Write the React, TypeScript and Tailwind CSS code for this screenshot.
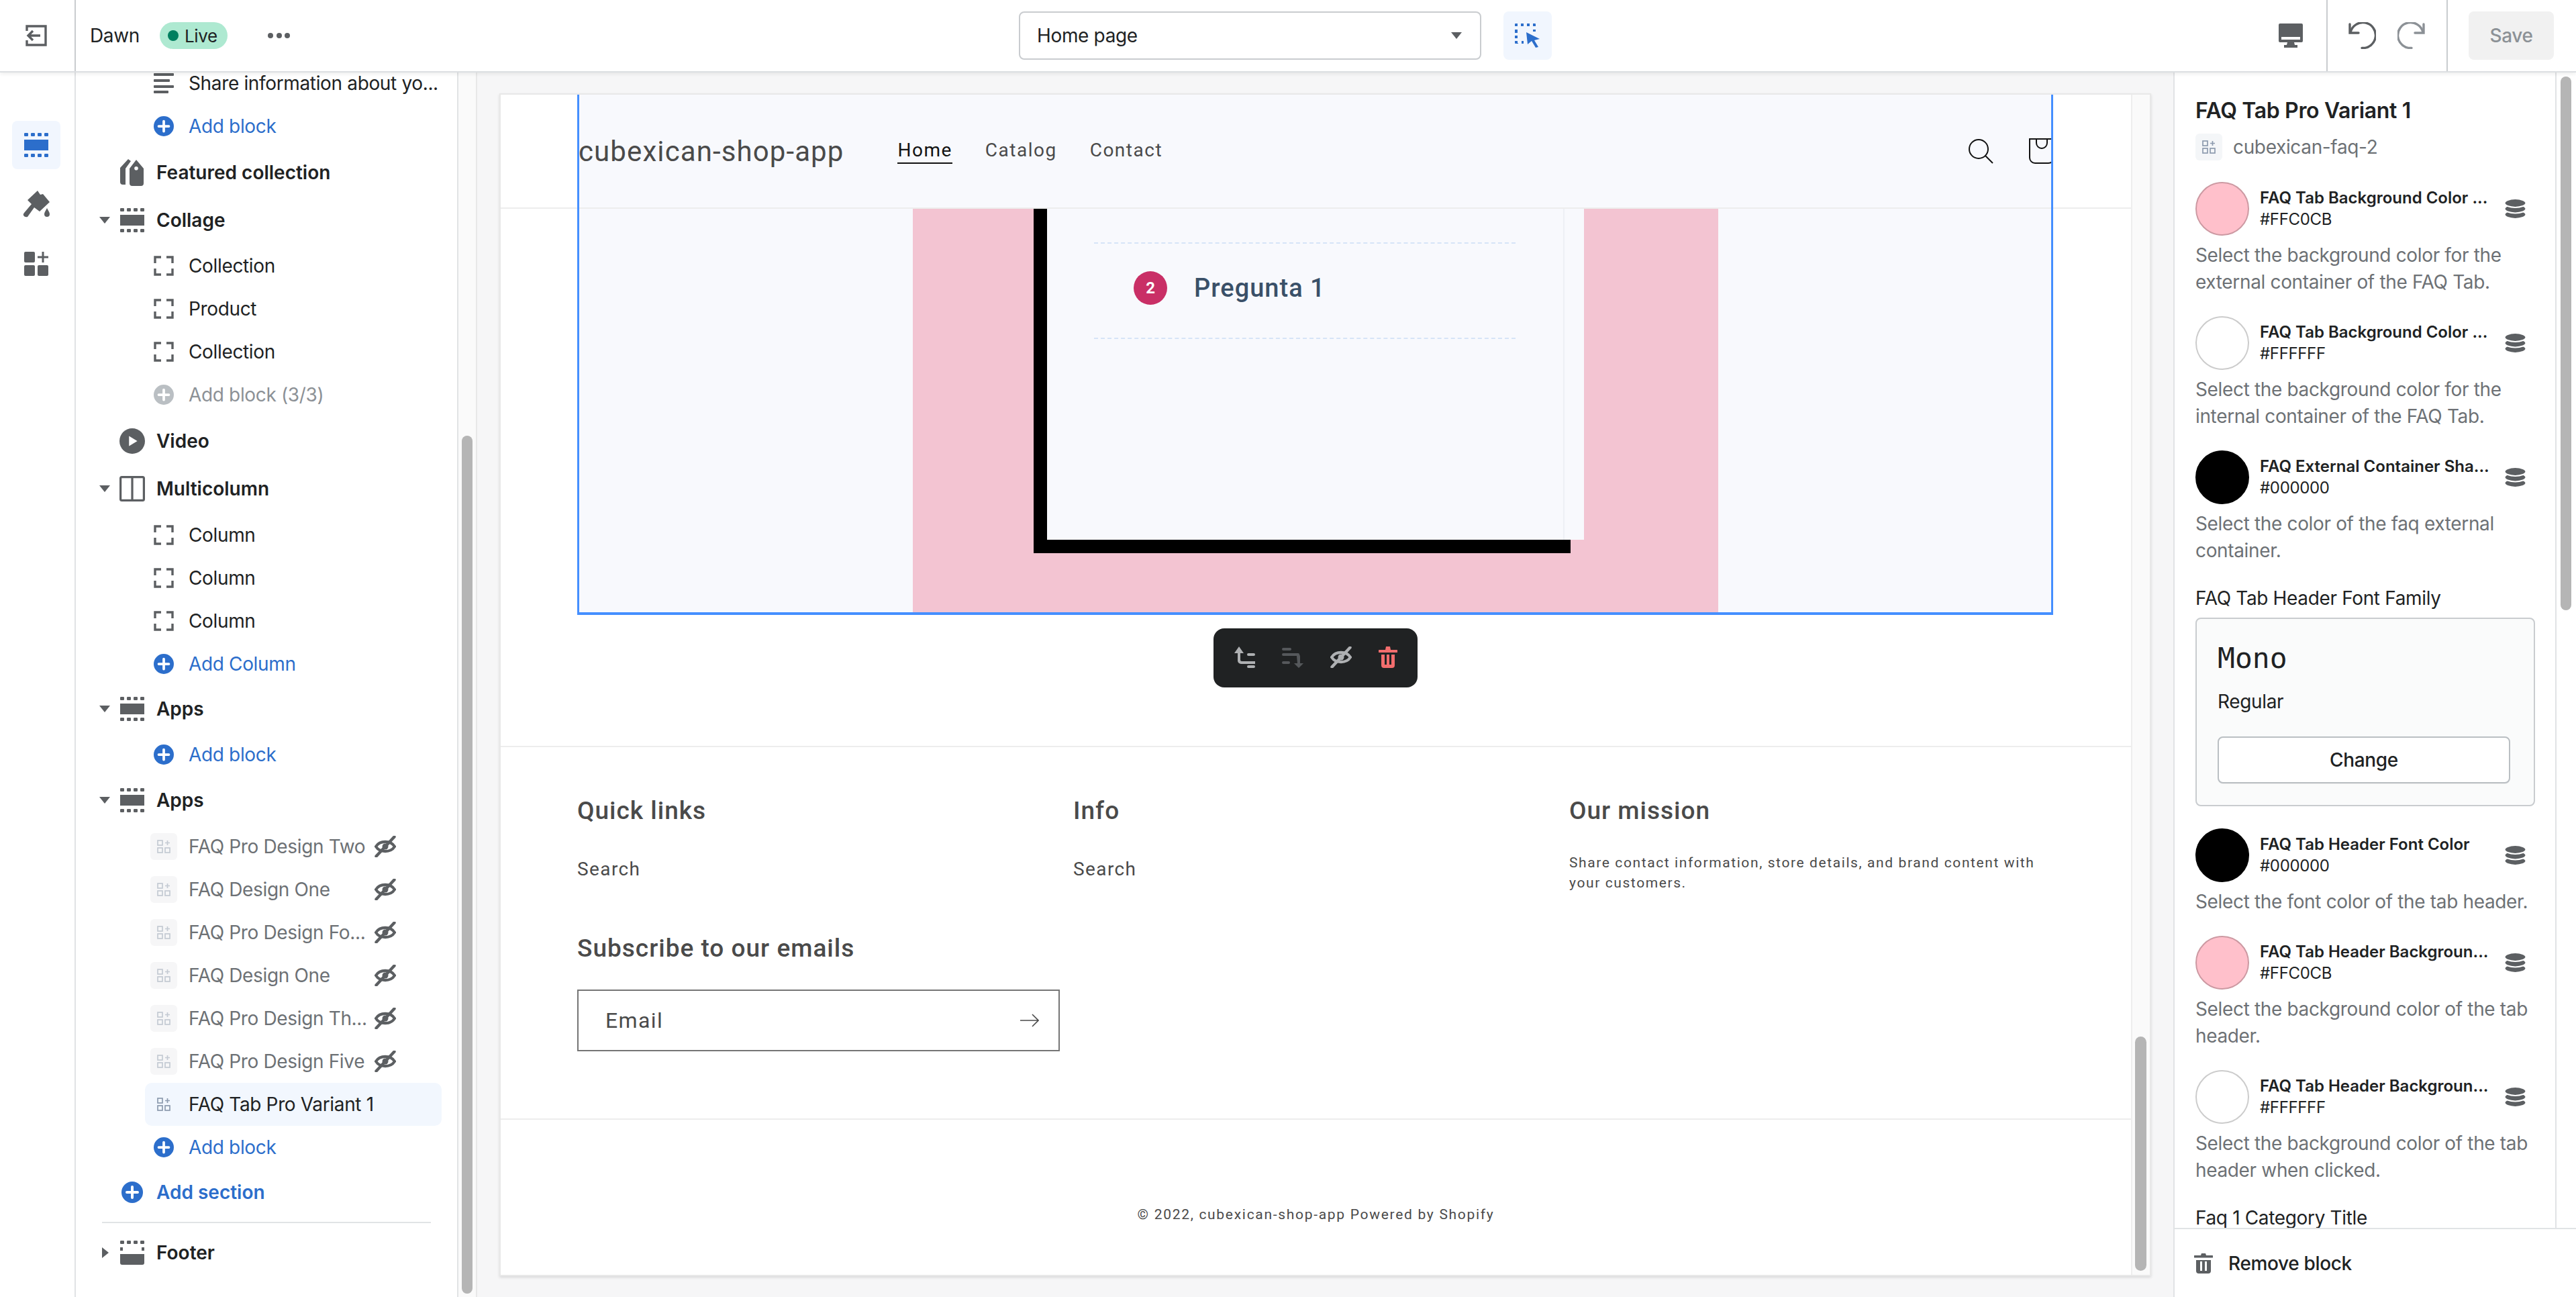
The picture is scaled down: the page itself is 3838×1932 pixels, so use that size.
import type { ReactNode } from "react"

const C = "font-['Inter','Liberation_Sans',sans-serif]"
const STORE = "font-['Roboto','Liberation_Sans',sans-serif]"

function SectionGlyph({ className = "", variant = "mid" }: { className?: string; variant?: "mid" | "footer" }) {
  const xs = [0, 10, 20, 30]
  return (
    <svg viewBox="0 0 36 36" className={className} fill="currentColor">
      {xs.map((x) => <rect key={x} x={x} y={0} width={6} height={5} rx={1.2} />)}
      {variant === "mid" ? (
        <>
          <rect x={0} y={10} width={36} height={16} />
          {xs.map((x) => <rect key={x} x={x} y={31} width={6} height={5} rx={1.2} />)}
        </>
      ) : (
        <>
          <rect x={0} y={10} width={4} height={5} />
          <rect x={32} y={10} width={4} height={5} />
          <path d="M0 20h36v13a3 3 0 0 1-3 3H3a3 3 0 0 1-3-3z" />
        </>
      )}
    </svg>
  )
}

function CornersGlyph() {
  return (
    <svg viewBox="0 0 30 30" className="h-[30px] w-[30px] text-[#5c5f62]" fill="none" stroke="currentColor" strokeWidth={3.4}>
      <path d="M2 11V2h9M19 2h9v9M28 19v9h-9M11 28H2v-9" />
    </svg>
  )
}

function LinesGlyph() {
  return (
    <svg viewBox="0 0 30 30" className="h-[30px] w-[30px] text-[#5c5f62]" fill="currentColor">
      <rect x={0} y={0} width={30} height={4} rx={1} />
      <rect x={0} y={9} width={24} height={4} rx={1} />
      <rect x={0} y={18} width={30} height={4} rx={1} />
      <rect x={0} y={26} width={22} height={4} rx={1} />
    </svg>
  )
}

function PlusCircle({ className = "" }: { className?: string }) {
  return (
    <svg viewBox="0 0 32 32" className={`h-[32px] w-[32px] ${className}`}>
      <circle cx={16} cy={16} r={16} fill="currentColor" />
      <path d="M16 8v16M8 16h16" stroke="#fff" strokeWidth={4} strokeLinecap="round" />
    </svg>
  )
}

function AppGlyph({ className = "" }: { className?: string }) {
  return (
    <svg viewBox="0 0 20 20" className={`h-[20px] w-[20px] ${className}`} fill="none" stroke="currentColor" strokeWidth={1.7}>
      <rect x={1} y={1} width={7} height={7} />
      <rect x={1} y={12} width={7} height={7} />
      <rect x={12} y={12} width={7} height={7} />
      <path d="M15.5 1v7M12 4.5h7" />
    </svg>
  )
}

function EyeOff({ className = "" }: { className?: string }) {
  return (
    <svg viewBox="0 0 32 32" className={`h-[32px] w-[32px] ${className}`} fill="none" stroke="currentColor">
      <path d="M2 16C8 6.500 24 6.500 30 16C24 25.500 8 25.500 2 16Z" strokeWidth={4.2} />
      <circle cx={16} cy={16} r={4.500} fill="currentColor" stroke="none" />
      <path d="M2.500 30.500L29.500 1.500" strokeWidth={4.4} strokeLinecap="round" />
    </svg>
  )
}

function DbGlyph() {
  return (
    <svg viewBox="0 0 31 30" className="h-[30px] w-[31px] text-[#5c5f62]" fill="currentColor" stroke="#fff" strokeWidth={2.2}>
      <ellipse cx={15.5} cy={23.500} rx={16} ry={6.500} />
      <ellipse cx={15.5} cy={15} rx={16} ry={6.500} />
      <ellipse cx={15.5} cy={6.500} rx={16} ry={6.500} />
    </svg>
  )
}

function Caret({ open = true }: { open?: boolean }) {
  return open ? (
    <svg viewBox="0 0 16 10" className="h-[10px] w-[16px] text-[#5c5f62]" fill="currentColor"><path d="M0 0h16L8 10z" /></svg>
  ) : (
    <svg viewBox="0 0 10 16" className="ml-[4px] h-[16px] w-[10px] text-[#5c5f62]" fill="currentColor"><path d="M0 0v16l10-8z" /></svg>
  )
}

function TagGlyph() {
  return (
    <svg viewBox="0 0 36 40" className="h-[40px] w-[36px] text-[#5c5f62]" fill="currentColor">
      <path fillRule="evenodd" d="M24 1l11 13v22a4 4 0 0 1-4 4H18a4 4 0 0 1-4-4V14zM24 11a2.800 2.800 0 1 0 0 5.600 2.800 2.800 0 0 0 0-5.600z" />
      <path d="M12 0l4 3-8 11v24H4a4 4 0 0 1-4-4V13z" />
    </svg>
  )
}

function PlayGlyph() {
  return (
    <svg viewBox="0 0 40 40" className="h-[40px] w-[40px] text-[#5c5f62]">
      <circle cx={20} cy={20} r={20} fill="currentColor" />
      <path d="M15 12l13 8-13 8z" fill="#fff" />
    </svg>
  )
}

function ColumnsGlyph() {
  return (
    <svg viewBox="0 0 40 40" className="h-[40px] w-[40px] text-[#5c5f62]" fill="none" stroke="currentColor" strokeWidth={3.4}>
      <rect x={1.7} y={1.7} width={36.6} height={36.6} rx={2} />
      <path d="M20 2v36" />
    </svg>
  )
}

// one row of the theme tree, top level
function SectionRow({ icon, label, caret, className = "h-[70px]" }: { icon: ReactNode; label: string; caret?: "open" | "closed"; className?: string }) {
  return (
    <div className={`flex shrink-0 items-center ${className}`}>
      <div className="ml-[35px] flex w-[30px] items-center">{caret && <Caret open={caret === "open"} />}</div>
      <div className="flex w-[38px] justify-center">{icon}</div>
      <span className="ml-[17px] text-[28px] font-semibold tracking-normal text-[#202223]">{label}</span>
    </div>
  )
}

function BlockRow({ icon, label, labelClass = "text-[#202223]", className = "" }: { icon: ReactNode; label: string; labelClass?: string; className?: string }) {
  return (
    <div className={`flex h-[64px] shrink-0 items-center ${className}`}>
      <div className="ml-[116px] flex w-[30px] justify-center">{icon}</div>
      <span className={`ml-[22px] whitespace-nowrap text-[28px] ${labelClass}`}>{label}</span>
    </div>
  )
}

function AddBlock({ label = "Add block", className = "" }: { label?: string; className?: string }) {
  return <BlockRow icon={<PlusCircle className="text-[#2c6ecb]" />} label={label} labelClass="text-[#2c6ecb]" className={className} />
}

function HiddenApp({ label }: { label: string }) {
  return (
    <div className="flex h-[64px] shrink-0 items-center">
      <div className="ml-[111px] flex h-[40px] w-[40px] items-center justify-center rounded-[6px] bg-[#f6f6f7]">
        <AppGlyph className="text-[#c4cad3]" />
      </div>
      <span className="ml-[17px] w-[277px] whitespace-nowrap text-[28px] text-[#6d7175]">{label}</span>
      <EyeOff className="text-[#5c5f62]" />
    </div>
  )
}

function Tree() {
  return (
    <div className="flex w-[570px] shrink-0 flex-col overflow-hidden border-r-2 border-[#e1e3e5] bg-white">
      <div className="-mt-[16px] flex flex-col">
        <BlockRow icon={<LinesGlyph />} label="Share information about yo..." />
        <AddBlock />
        <SectionRow className="mt-[2px] h-[70px]" icon={<TagGlyph />} label="Featured collection" />
        <SectionRow className="h-[72px]" caret="open" icon={<SectionGlyph className="h-[36px] w-[36px] text-[#5c5f62]" />} label="Collage" />
        <BlockRow icon={<CornersGlyph />} label="Collection" />
        <BlockRow icon={<CornersGlyph />} label="Product" />
        <BlockRow icon={<CornersGlyph />} label="Collection" />
        <BlockRow icon={<PlusCircle className="text-[#babfc3]" />} label="Add block (3/3)" labelClass="text-[#8c9196]" />
        <SectionRow className="mt-[2px] h-[70px]" icon={<PlayGlyph />} label="Video" />
        <SectionRow className="h-[72px]" caret="open" icon={<ColumnsGlyph />} label="Multicolumn" />
        <BlockRow icon={<CornersGlyph />} label="Column" className="mt-[1px]" />
        <BlockRow icon={<CornersGlyph />} label="Column" />
        <BlockRow icon={<CornersGlyph />} label="Column" />
        <AddBlock label="Add Column" />
        <SectionRow className="mt-[1px] h-[68px]" caret="open" icon={<SectionGlyph className="h-[36px] w-[36px] text-[#5c5f62]" />} label="Apps" />
        <AddBlock className="mt-[2px]" />
        <SectionRow className="mt-[1px] h-[70px]" caret="open" icon={<SectionGlyph className="h-[36px] w-[36px] text-[#5c5f62]" />} label="Apps" />
        <div className="mt-[2px] flex flex-col">
          <HiddenApp label="FAQ Pro Design Two" />
          <HiddenApp label="FAQ Design One" />
          <HiddenApp label="FAQ Pro Design Fo..." />
          <HiddenApp label="FAQ Design One" />
          <HiddenApp label="FAQ Pro Design Th..." />
          <HiddenApp label="FAQ Pro Design Five" />
          <div className="ml-[103px] flex h-[64px] w-[442px] items-center rounded-[10px] bg-[#f2f7fe]">
            <div className="ml-[8px] flex h-[40px] w-[40px] items-center justify-center">
              <AppGlyph className="text-[#8c9aae]" />
            </div>
            <span className="ml-[17px] text-[28px] text-[#202223]">FAQ Tab Pro Variant 1</span>
          </div>
          <AddBlock />
        </div>
        <div className="flex h-[70px] shrink-0 items-center">
          <div className="ml-[65px] flex w-[38px] justify-center"><PlusCircle className="text-[#2c6ecb]" /></div>
          <span className="ml-[17px] text-[28px] font-semibold tracking-normal text-[#2c6ecb]">Add section</span>
        </div>
        <div className="mx-[39px] mt-[9px] h-[2px] bg-[#e1e3e5]" />
        <SectionRow className="mt-[9px] h-[70px]" caret="closed" icon={<SectionGlyph variant="footer" className="h-[36px] w-[36px] text-[#5c5f62]" />} label="Footer" />
      </div>
    </div>
  )
}

function Rail() {
  return (
    <div className="flex w-[113px] shrink-0 flex-col items-start border-r-2 border-[#e1e3e5] bg-white">
      <div className="ml-[18px] mt-[72px] flex h-[72px] w-[72px] items-center justify-center rounded-[8px] bg-[#f1f6fe]">
        <SectionGlyph className="h-[36px] w-[36px] text-[#2c6ecb]" />
      </div>
      <svg viewBox="0 0 40 40" className="ml-[34px] mt-[32px] h-[40px] w-[40px] text-[#5c5f62]" fill="currentColor">
        <path d="M22 0l4 6 4-1 10 12-15 14-8-6L7 39q-4 1-6-2-1-2 1-4l11-13-6-6z" />
        <path d="M36 26c2 4 4 6 4 9a4 4 0 0 1-8 0c0-3 2-5 4-9z" />
      </svg>
      <svg viewBox="0 0 36 36" className="ml-[36px] mt-[51px] h-[36px] w-[36px] text-[#5c5f62]" fill="currentColor">
        <rect x={0} y={0} width={16} height={16} rx={2} />
        <rect x={0} y={20} width={16} height={16} rx={2} />
        <rect x={20} y={20} width={16} height={16} rx={2} />
        <path d="M26.500 0h3v6.500H36v3h-6.500V16h-3V9.500H20v-3h6.500z" />
      </svg>
    </div>
  )
}

function TopBar() {
  return (
    <div className="relative z-10 flex h-[108px] shrink-0 items-center border-b-2 border-[#dcdfe2] bg-white shadow-[0_2px_6px_rgba(0,0,0,0.08)]">
      <div className="flex h-full w-[113px] shrink-0 items-center border-r-2 border-[#c9cccf] pl-[38px]">
        <svg viewBox="0 0 32 32" className="h-[32px] w-[32px] text-[#5c5f62]" fill="none" stroke="currentColor" strokeWidth={3.4}>
          <path d="M2 9V2h28v28H2v-7" />
          <path d="M22 16H4M11 9l-7 7 7 7" />
        </svg>
      </div>
      <span className="ml-[21px] text-[28px] text-[#202223]">Dawn</span>
      <div className="ml-[30px] flex h-[40px] w-[101px] items-center rounded-full bg-[#aee9d1] pl-[12px]">
        <span className="h-[16px] w-[16px] rounded-full bg-[#007f5f]" />
        <span className="ml-[9px] text-[26px] text-[#202223]">Live</span>
      </div>
      <div className="ml-[60px] flex gap-[4.500px]">
        <span className="h-[8px] w-[8px] rounded-full bg-[#5c5f62]" />
        <span className="h-[8px] w-[8px] rounded-full bg-[#5c5f62]" />
        <span className="h-[8px] w-[8px] rounded-full bg-[#5c5f62]" />
      </div>
      <div className="ml-[1086px] flex h-[72px] w-[689px] items-center justify-between rounded-[8px] border-2 border-[#c9cccf] pl-[25px] pr-[27px]">
        <span className="text-[28px] text-[#202223]">Home page</span>
        <svg viewBox="0 0 16 10" className="h-[10px] w-[16px] text-[#5c5f62]" fill="currentColor"><path d="M0 0h16L8 10z" /></svg>
      </div>
      <div className="ml-[33px] flex h-[72px] w-[72px] items-center justify-center rounded-[8px] bg-[#f1f6fe]">
        <svg viewBox="0 0 38 36" className="h-[36px] w-[38px] text-[#2c6ecb]" fill="currentColor">
          <path d="M0 1a1 1 0 0 1 1-1h3v4H0zM9 0h4v4H9zM18 0h4v4h-4zM27 0h3a1 1 0 0 1 1 1v3h-4zM0 9h4v5H0zM27 9h4v3h-4zM0 18h4v4H0zM0 26h4v3h1v1H1a1 1 0 0 1-1-1zM10 26h3v4h-3z" />
          <path d="M17 13l20 10-8 2 6 10-4 1-6-10-6 5z" />
        </svg>
      </div>
      <div className="ml-auto flex h-full items-center">
        <svg viewBox="0 0 36 36" className="h-[36px] w-[36px] text-[#5c5f62]" fill="currentColor">
          <path fillRule="evenodd" d="M2 0h32a2 2 0 0 1 2 2v24a2 2 0 0 1-2 2H2a2 2 0 0 1-2-2V2a2 2 0 0 1 2-2zM4 20v4h28v-4z" />
          <path d="M13 28h10l1 4h4v4H8v-4h4z" />
        </svg>
        <div className="ml-[35px] flex h-full items-center border-x-2 border-[#c9cccf] pl-[31px] pr-[32px]">
          <svg viewBox="0 0 41 40" className="h-[40px] w-[41px] text-[#5c5f62]" fill="none" stroke="currentColor" strokeWidth={3.4} strokeLinecap="round">
            <path d="M2 3v13h13" />
            <path d="M3 15A19 19 0 1 1 20 38.500" />
          </svg>
          <svg viewBox="0 0 41 40" className="ml-[32px] h-[40px] w-[41px] text-[#8c9196]" fill="none" stroke="currentColor" strokeWidth={3.4} strokeLinecap="round">
            <path d="M39 3v13H26" />
            <path d="M38 15A19 19 0 1 0 21 38.500" />
          </svg>
        </div>
        <div className="ml-[31px] mr-[33px] flex h-[72px] w-[127px] items-center justify-center rounded-[8px] bg-[#f1f1f1] text-[28px] font-medium text-[#8c9196]">
          Save
        </div>
      </div>
    </div>
  )
}

function FloatingTools() {
  return (
    <div className="absolute left-[1062px] top-[24px] flex h-[88px] w-[304px] items-center justify-center gap-[40px] rounded-[16px] bg-[#202223] pb-[2px]">
      <svg viewBox="0 0 32 32" className="h-[32px] w-[32px] text-[#aeb0b2]" fill="currentColor">
        <path d="M8 0l7 10h-5v10a2 2 0 0 0 2 2h20v4H11a5 5 0 0 1-5-5V10H1z" />
        <rect x={20} y={10} width={12} height={4} rx={2} />
        <rect x={20} y={28} width={12} height={4} rx={2} />
      </svg>
      <svg viewBox="0 0 32 32" className="h-[32px] w-[32px] text-[#55585b]" fill="currentColor">
        <rect x={0} y={2} width={14} height={4} rx={2} />
        <rect x={0} y={10} width={26} height={4} rx={2} />
        <path d="M22 14v-4a5 5 0 0 1 5 5v10h5l-7 7-7-7h5z" />
        <rect x={0} y={22} width={12} height={4} rx={2} />
      </svg>
      <EyeOff className="text-[#aeb0b2]" />
      <svg viewBox="0 0 28 32" className="h-[32px] w-[28px] text-[#f26d6d]" fill="currentColor">
        <path d="M11 0h6l1 5h9a1.500 1.500 0 0 1 0 4H1a1.500 1.500 0 0 1 0-4h9z" />
        <path fillRule="evenodd" d="M4 12h20v16a4 4 0 0 1-4 4H8a4 4 0 0 1-4-4zM9 12v15h3V12zM16 12v15h3V12z" />
      </svg>
    </div>
  )
}

function Preview() {
  return (
    <div className="flex h-full flex-1 overflow-hidden border-2 border-[#e8e8e8] bg-white shadow-[0_2px_4px_rgba(0,0,0,0.12)]">
      <div className={`w-[2429px] shrink-0 text-[#4a4a4a] ${STORE}`}>
        <div className="relative border-b-2 border-[#ededed]">
          <div className="ml-[116px] flex h-[168px] w-[2196px] items-center overflow-hidden bg-[#f8f9fd]">
            <span className="text-[42px] tracking-[1.100px]">cubexican-shop-app</span>
            <nav className="ml-[80px] flex gap-[49px] text-[28px] tracking-[1.500px]">
              <span className="border-b-2 border-[#121212] leading-[36px] text-[#121212]">Home</span>
              <span className="leading-[36px]">Catalog</span>
              <span className="leading-[36px]">Contact</span>
            </nav>
            <svg viewBox="0 0 38 38" className="ml-auto h-[38px] w-[38px] text-[#121212]" fill="none" stroke="currentColor" strokeWidth={2}>
              <circle cx={16} cy={16} r={14} />
              <path d="M26 26l11 11" />
            </svg>
            <svg viewBox="0 0 38 38" className="-mr-[3px] ml-[53px] h-[38px] w-[38px] shrink-0 text-[#121212]" fill="none" stroke="currentColor" strokeWidth={2}>
              <path d="M1 1h36v28a8 8 0 0 1-8 8H9a8 8 0 0 1-8-8z" />
              <path d="M11 1v6a8 8 0 0 0 16 0V1" />
            </svg>
          </div>
        </div>
        <div className="relative">
          <div className="ml-[116px] flex h-[601px] w-[2196px] justify-center bg-[#f8f9fd]">
            <div className="flex h-full w-[1200px] justify-center overflow-hidden bg-[#f3c4d2]">
              <div className="-mt-[40px] flex h-[533px] w-[800px] bg-[#f8f9fd] shadow-[-20px_20px_0_#000]">
                <div className="w-[771px] border-r-2 border-[#eef0f5] pl-[70px] pt-[90px]">
                  <div className="flex h-[144px] w-[628px] items-center border-y-2 border-dashed border-[#d6e4f7] pb-[8px] pl-[59px]">
                    <span className="flex h-[50px] w-[50px] items-center justify-center rounded-full bg-[#c92f66] text-[24px] font-bold text-white">2</span>
                    <span className="ml-[40px] text-[38px] font-medium tracking-[1px] text-[#3a5068]">Pregunta 1</span>
                  </div>
                </div>
              </div>
            </div>
          </div>
          <div className="relative h-[201px] border-b-2 border-[#ededed]">
            <FloatingTools />
          </div>
          <div className="pointer-events-none absolute -top-[172px] bottom-[197px] left-[114px] w-[2199px] border-x-[3px] border-b-4 border-[#458fff]" />
        </div>
        <footer className="pl-[114px]">
          <div className="grid grid-cols-[739px_739px_700px] pt-[73px]">
            <div>
              <h3 className="text-[37px] font-medium leading-[44px] tracking-[1px]">Quick links</h3>
              <p className="mt-[45px] text-[28px] leading-[40px] tracking-[1.400px]">Search</p>
            </div>
            <div>
              <h3 className="text-[37px] font-medium leading-[44px] tracking-[1px]">Info</h3>
              <p className="mt-[45px] text-[28px] leading-[40px] tracking-[1.400px]">Search</p>
            </div>
            <div>
              <h3 className="text-[37px] font-medium leading-[44px] tracking-[1px]">Our mission</h3>
              <p className="mt-[40px] text-[21px] leading-[30px] tracking-[1.600px]">Share contact information, store details, and brand content with your customers.</p>
            </div>
          </div>
          <h3 className="mt-[61px] text-[37px] font-medium leading-[44px] tracking-[1px]">Subscribe to our emails</h3>
          <div className="mt-[39px] flex h-[92px] w-[719px] items-center justify-between border-2 border-[#757575] pl-[40px] pr-[29px]">
            <span className="text-[32px] tracking-[1.400px]">Email</span>
            <svg viewBox="0 0 28 20" className="h-[20px] w-[28px]" fill="none" stroke="currentColor" strokeWidth={1.6}>
              <path d="M0 10h27M18 1l9 9-9 9" />
            </svg>
          </div>
        </footer>
        <div className="mt-[100px] border-t-2 border-[#ededed] pt-[126px] text-center text-[21px] leading-[30px] tracking-[1.700px]">
          © 2022, cubexican-shop-app Powered by Shopify
        </div>
      </div>
      <div className="flex flex-1 flex-col justify-end border-l-2 border-[#eeeeee] bg-[#fafafa] pb-[6px] pl-[4px]">
        <div className="h-[349px] w-[17px] rounded-full bg-[#b5b5b5]" />
      </div>
    </div>
  )
}

function ColorSetting({ color, label, hex, help, className = "mb-[31px]", ring }: { color: string; label: string; hex: string; help: string[]; className?: string; ring: string }) {
  return (
    <div className={className}>
      <div className="flex h-[80px] items-center">
        <span className={`h-[80px] w-[80px] shrink-0 rounded-full border-2 ${ring}`} style={{ backgroundColor: color }} />
        <div className="ml-[16px] flex w-[350px] flex-col">
          <span className="whitespace-nowrap text-[24px] font-semibold leading-[32px] tracking-normal text-[#202223]">{label}</span>
          <span className="text-[24px] leading-[32px] text-[#202223]">{hex}</span>
        </div>
        <div className="ml-[15px]"><DbGlyph /></div>
      </div>
      <div className="mt-[9px] text-[28px] leading-[40px] text-[#6d7175]">
        {help.map((line) => <div key={line} className="whitespace-nowrap">{line}</div>)}
      </div>
    </div>
  )
}

function Settings() {
  return (
    <div className="flex w-[600px] shrink-0 flex-col overflow-hidden border-l-2 border-[#e1e3e5] bg-white">
      <div className="flex min-h-0 flex-1">
        <div className="w-[569px] overflow-hidden border-r-2 border-[#e1e3e5] pl-[31px] pt-[33px]">
          <h2 className="text-[32px] font-semibold leading-[48px] text-[#202223]">FAQ Tab Pro Variant 1</h2>
          <div className="mt-[10px] flex h-[40px] items-center">
            <span className="flex h-[40px] w-[40px] items-center justify-center rounded-[6px] bg-[#f4f6f8]"><AppGlyph className="text-[#8c9aae]" /></span>
            <span className="ml-[16px] text-[28px] text-[#6d7175]">cubexican-faq-2</span>
          </div>
          <div className="mt-[32px]">
            <ColorSetting color="#ffc0cb" ring="border-[#cc99a2]" label="FAQ Tab Background Color ..." hex="#FFC0CB" help={["Select the background color for the", "external container of the FAQ Tab."]} />
            <ColorSetting color="#ffffff" ring="border-[#cccccc]" label="FAQ Tab Background Color ..." hex="#FFFFFF" help={["Select the background color for the", "internal container of the FAQ Tab."]} />
            <ColorSetting color="#000000" ring="border-black" label="FAQ External Container Sha..." hex="#000000" help={["Select the color of the faq external", "container."]} />
          </div>
          <div className="text-[28px] leading-[40px] text-[#202223]">FAQ Tab Header Font Family</div>
          <div className="mt-[9px] h-[281px] w-[506px] rounded-[8px] border-2 border-[#c9cccf] bg-[#fafbfb] pl-[31px] pt-[30px]">
            <div className="font-['DejaVu_Sans_Mono',monospace] text-[43px] leading-[56px] tracking-normal text-[#202223]">Mono</div>
            <div className="mt-[17px] text-[28px] leading-[40px] text-[#202223]">Regular</div>
            <div className="mt-[32px] flex h-[70px] w-[436px] items-center justify-center rounded-[8px] border-2 border-[#babfc3] bg-white text-[28px] font-medium text-[#202223] shadow-[0_1px_0_rgba(0,0,0,0.05)]">
              Change
            </div>
          </div>
          <div className="mt-[33px]">
            <ColorSetting color="#000000" ring="border-black" label="FAQ Tab Header Font Color" hex="#000000" help={["Select the font color of the tab header."]} />
            <ColorSetting color="#ffc0cb" ring="border-[#cc99a2]" label="FAQ Tab Header Backgroun..." hex="#FFC0CB" help={["Select the background color of the tab", "header."]} />
            <ColorSetting color="#ffffff" ring="border-[#cccccc]" label="FAQ Tab Header Backgroun..." hex="#FFFFFF" help={["Select the background color of the tab", "header when clicked."]} />
          </div>
          <div className="text-[28px] leading-[40px] text-[#202223]">Faq 1 Category Title</div>
        </div>
        <div className="ml-[6px] mt-[6px] h-[795px] w-[16px] rounded-full bg-[#b5b5b5]" />
      </div>
      <div className="flex h-[103px] shrink-0 items-center border-t-2 border-[#e1e3e5] pl-[29px]">
        <svg viewBox="0 0 28 30" className="h-[30px] w-[28px] text-[#5c5f62]" fill="currentColor">
          <path d="M11 0h6l1 3h9a1.500 1.500 0 0 1 0 3.500H1A1.500 1.500 0 0 1 1 3h9z" />
          <path fillRule="evenodd" d="M3 10h22v16a4 4 0 0 1-4 4H7a4 4 0 0 1-4-4zM9 12v14h3V12zM16 12v14h3V12z" />
        </svg>
        <span className="ml-[23px] text-[28px] font-medium text-[#202223]">Remove block</span>
      </div>
    </div>
  )
}

export default function App() {
  return (
    <div className={`flex h-[1932px] w-[3838px] flex-col overflow-hidden bg-[#f6f6f7] tracking-[-0.35px] ${C}`}>
      <TopBar />
      <div className="flex min-h-0 flex-1">
        <Rail />
        <Tree />
        <div className="flex w-[28px] shrink-0 border-r-2 border-[#e8e8e8] bg-[#fafafa] pl-[5px]">
          <div className="mt-[541px] h-[1278px] w-[16px] rounded-full bg-[#b5b5b5]" />
        </div>
        <div className="flex min-w-0 flex-1 pb-[31px] pl-[33px] pr-[33px] pt-[31px]">
          <Preview />
        </div>
        <Settings />
      </div>
    </div>
  )
}
